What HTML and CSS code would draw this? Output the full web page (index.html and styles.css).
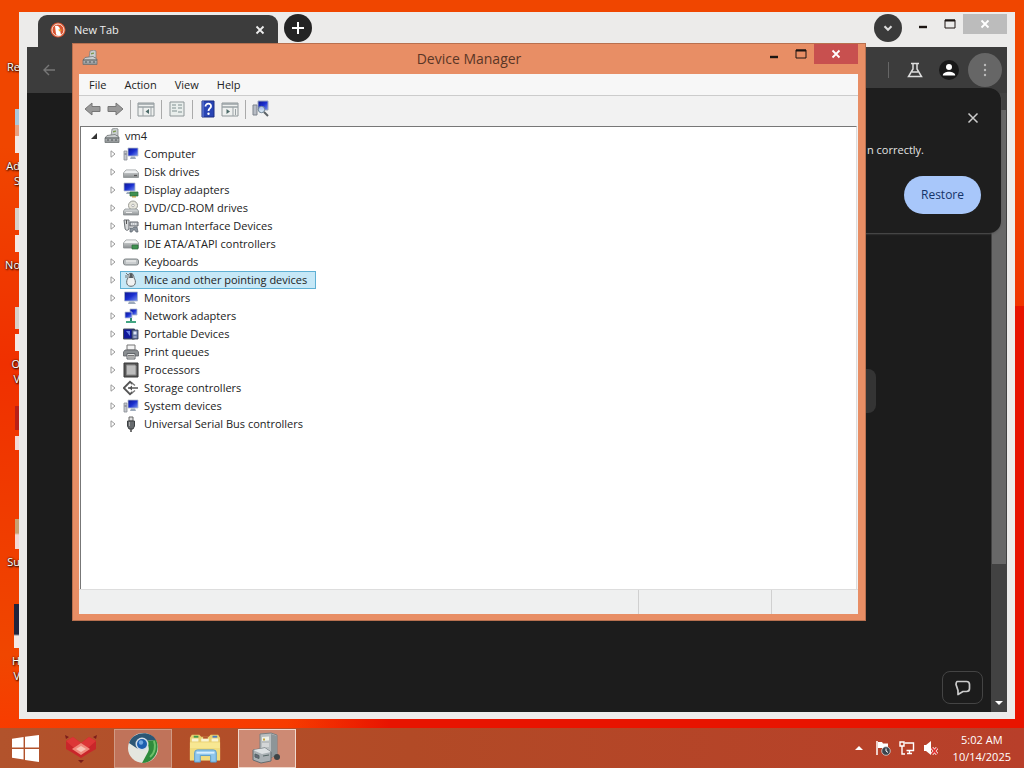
FILE: index.html
```html
<!DOCTYPE html>
<html lang="en">
<head>
<meta charset="utf-8">
<title>Device Manager</title>
<link rel="stylesheet" href="styles.css">
</head>
<body>
<svg class="defs" aria-hidden="true">
  <defs>
    <linearGradient id="metal" x1="0" y1="0" x2="0" y2="1"><stop offset="0" stop-color="#dfe2e3"/><stop offset="1" stop-color="#8b8f91"/></linearGradient>
    <linearGradient id="screen" x1="0" y1="0" x2="1" y2="1"><stop offset="0" stop-color="#0c1690"/><stop offset=".5" stop-color="#1a2fd0"/><stop offset="1" stop-color="#7d97ee"/></linearGradient>
    <symbol id="i-pc" viewBox="0 0 16 16"><path d="M8 1l4-1 2 1v7H7z" fill="#c9cdce" stroke="#777c7e" stroke-width=".7"/><path d="M9 3l3-.6v1.400L9 4.400z" fill="#7d9a50"/><path d="M3 7.500l8-1 4 2.500v5.500H1V10z" fill="url(#metal)" stroke="#6d7274" stroke-width=".8"/><path d="M1 10h14M3 12h2M7 12h2M11 12h2" stroke="#4f5557"/></symbol>
    <symbol id="i-computer" viewBox="0 0 16 16"><path d="M1 5h3v9H1z" fill="#c3c6cb" stroke="#888d94" stroke-width=".8"/><path d="M1.500 8h2" stroke="#667"/><path d="M5 2h10v8H5z" fill="url(#screen)" stroke="#b4bccb" stroke-width=".8"/><path d="M8 10.500h4l1 2.500H7z" fill="#9daaba"/></symbol>
    <symbol id="i-disk" viewBox="0 0 16 16"><path d="M3 6h10l2.500 3v4.500H.5V9z" fill="url(#metal)" stroke="#8c9092" stroke-width=".8"/><path d="M3 6.500h10l2 2.500H1z" fill="#eef0f1"/><path d="M11 11.500h3" stroke="#555" stroke-width="1.200"/></symbol>
    <symbol id="i-display" viewBox="0 0 16 16"><path d="M1 1h11v8H1z" fill="url(#screen)" stroke="#b4bccb" stroke-width=".8"/><path d="M4 10h4v2H3z" fill="#9daaba"/><path d="M7 10h8v4H7z" fill="#3f9150" stroke="#296b3a" stroke-width=".7"/><path d="M9 14v1.500h4V14" fill="#b6a252"/></symbol>
    <symbol id="i-dvd" viewBox="0 0 16 16"><circle cx="10" cy="5.500" r="4.500" fill="#e7e6dc" stroke="#9c9c96"/><circle cx="10" cy="5.500" r="1.300" fill="#fff" stroke="#999" stroke-width=".7"/><path d="M2 9h12l1.500 2v4H.5v-4z" fill="url(#metal)" stroke="#8c9092" stroke-width=".8"/><path d="M3 12.500h6" stroke="#eee"/></symbol>
    <symbol id="i-hid" viewBox="0 0 16 16"><path d="M1 2h5v8c0 3-4 3-4 0z" fill="#d6d8da" stroke="#666b70"/><path d="M3.500 2v4" stroke="#555"/><path d="M7 4h8v4H7z" fill="#bfc3c7" stroke="#666b70"/><path d="M8 6h6" stroke="#fff" stroke-dasharray="1 1"/><path d="M7 10h3l1-1h3l1 5h-2l-1-2h-2l-1 2H7z" fill="#8d959e" stroke="#5d656e" stroke-width=".7"/></symbol>
    <symbol id="i-ide" viewBox="0 0 16 16"><path d="M3 4h10l2.500 3v5H.5V7z" fill="url(#metal)" stroke="#8c9092" stroke-width=".8"/><path d="M3 4.500h10L15 7H1z" fill="#f2f3f3"/><path d="M9 9h6v4H9z" fill="#3f9150" stroke="#296b3a" stroke-width=".7"/></symbol>
    <symbol id="i-keyboard" viewBox="0 0 16 16"><rect x=".5" y="5" width="15" height="6" rx="2" fill="#b9bdbf" stroke="#7f8587"/><path d="M3 7h10" stroke="#f4f4f4" stroke-width="1.300"/><path d="M3 9h10" stroke="#dfe1e2"/></symbol>
    <symbol id="i-mouse" viewBox="0 0 16 16"><path d="M3 1l2 2M3 3v3" stroke="#777" fill="none"/><path d="M6 2c3-2 5 1 5 4 1 1 2 4 1 6-1 3-7 3-8 0-.8-2 0-5 1-6 0-2 0-3 1-4z" fill="#f1f2f2" stroke="#62696c"/><path d="M7 1.500h2.500L10 6H6z" fill="#555c60"/></symbol>
    <symbol id="i-monitor" viewBox="0 0 16 16"><path d="M1.500 2h13v9h-13z" fill="url(#screen)" stroke="#aab6cc" stroke-width=".8"/><path d="M6 11.500h5l2 2.500H5z" fill="#9daaba"/></symbol>
    <symbol id="i-network" viewBox="0 0 16 16"><path d="M7 1h7v6H7z" fill="url(#screen)" stroke="#aab6cc" stroke-width=".8"/><path d="M2 4h7v6H2z" fill="url(#screen)" stroke="#b9c4d8" stroke-width=".8"/><path d="M8 10v3" stroke="#2d8a70" stroke-width="2"/><path d="M3 13h10v2H3z" fill="#43a582"/></symbol>
    <symbol id="i-portable" viewBox="0 0 16 16"><path d="M.5 3h11v10H.5z" fill="#10189a" stroke="#49505c"/><path d="M3 5h4v5z" fill="#697fe0"/><path d="M9 4h6v9H9z" fill="#6577a5" stroke="#303848" stroke-width=".8"/><path d="M10.500 5.500h3v3h-3z" fill="#dfe7f5"/><path d="M10.500 11h3" stroke="#ccd"/></symbol>
    <symbol id="i-print" viewBox="0 0 16 16"><path d="M4 1h8v5H4z" fill="#f3f3f3" stroke="#777"/><path d="M2 6h12l1.500 2v4H.5V8z" fill="#8a8e91" stroke="#5d6164" stroke-width=".8"/><path d="M4 9.500h8V15H4z" fill="#e4e5e6" stroke="#62666a"/><path d="M5 11.500h6M5 13h6" stroke="#777"/></symbol>
    <symbol id="i-cpu" viewBox="0 0 16 16"><path d="M1 1h14v14H1z" fill="#565656" stroke="#393939"/><path d="M3.500 3h8.500l1 1v9H3.500z" fill="#bdbdbd" stroke="#888"/></symbol>
    <symbol id="i-storage" viewBox="0 0 16 16"><path d="M9.500 4L7 1.800.8 8 7 14.200 9.500 12" fill="none" stroke="#555" stroke-width="1.800"/><path d="M5 8h10" stroke="#555" stroke-width="1.500"/><path d="M9 5.500v5L6 8z" fill="#555"/><path d="M9 3l3 2.500M9 13l3-2.500" stroke="#777" stroke-width="1.300"/></symbol>
    <symbol id="i-usb" viewBox="0 0 16 16"><path d="M6 1h4v4H6z" fill="#ddd" stroke="#666"/><path d="M4.500 5h7v5L10 13H6l-1.500-3z" fill="#666a6d" stroke="#3c4042"/><path d="M8 13v3" stroke="#444" stroke-width="1.500"/><path d="M6.500 6v4" stroke="#aaa"/></symbol>
    <symbol id="i-min" viewBox="0 0 12 12"><path d="M2 9h8" stroke="currentColor" stroke-width="2.400"/></symbol>
    <symbol id="i-max" viewBox="0 0 12 12"><path d="M1 2h10v8H1z" fill="none" stroke="currentColor"/><path d="M1 2.500h10" stroke="currentColor" stroke-width="2"/></symbol>
    <symbol id="i-x" viewBox="0 0 12 12"><path d="M2.500 2.500l7 7M9.500 2.500l-7 7" stroke="currentColor" stroke-width="1.800" fill="none"/></symbol>
  </defs>
</svg>

<main class="desktop">
  <ul class="shortcuts">
    <li class="shortcut"><span class="shortcut-icon none"></span><span class="shortcut-label">Re</span></li>
    <li class="shortcut"><span class="shortcut-icon blue"></span><span class="shortcut-label">Ad<br>S</span></li>
    <li class="shortcut"><span class="shortcut-icon paper"></span><span class="shortcut-label">No</span></li>
    <li class="shortcut"><span class="shortcut-icon paper"></span><span class="shortcut-label">O<br>V</span></li>
    <li class="shortcut"><span class="shortcut-icon red"></span><span class="shortcut-label"></span></li>
    <li class="shortcut"><span class="shortcut-icon small"></span><span class="shortcut-label">Su</span></li>
    <li class="shortcut"><span class="shortcut-icon navy"></span><span class="shortcut-label">H<br>V</span></li>
  </ul>

  <section class="browser" aria-label="Browser">
    <header class="tabstrip">
      <div class="tab">
        <svg class="favicon" viewBox="0 0 16 16"><circle cx="8" cy="8" r="7.500" fill="#d9532f"/><circle cx="8" cy="8" r="6" fill="none" stroke="#f6e7df"/><path d="M5 4c3-1 5 1 5 4l1 5c-2 1-4 1-5-1z" fill="#fff"/><path d="M8.500 7l3.500 1-3 1.500z" fill="#f0b429"/></svg>
        <span class="tab-title">New Tab</span>
        <button class="tab-close" aria-label="Close tab"><svg viewBox="0 0 12 12"><use href="#i-x"/></svg></button>
      </div>
      <button class="round" aria-label="New tab"><svg viewBox="0 0 14 14"><path d="M7 1v12M1 7h12" stroke="#fff" stroke-width="2"/></svg></button>
      <span class="grow"></span>
      <button class="round tabs-menu" aria-label="Search tabs"><svg viewBox="0 0 12 12"><path d="M3 4.500l3 3 3-3" fill="none" stroke="#ddd" stroke-width="1.800"/></svg></button>
      <div class="caption">
        <button aria-label="Minimize"><svg viewBox="0 0 12 12"><use href="#i-min"/></svg></button>
        <button aria-label="Maximize"><svg viewBox="0 0 12 12"><use href="#i-max"/></svg></button>
        <button class="caption-close" aria-label="Close"><svg viewBox="0 0 12 12"><use href="#i-x"/></svg></button>
      </div>
    </header>
    <div class="browser-body">
      <div class="toolbar">
        <button aria-label="Back"><svg viewBox="0 0 14 14"><path d="M13 7H2M7 2L2 7l5 5" fill="none" stroke="#777" stroke-width="1.400"/></svg></button>
        <span class="grow"></span>
        <span class="toolbar-rule"></span>
        <button aria-label="Labs"><svg class="lab" viewBox="0 0 16 16"><path d="M4 1.500h8M6 2v5l-4.500 7.500h13L10 7V2M5 10h6" fill="none" stroke="#ddd" stroke-width="1.500"/></svg></button>
        <button class="profile" aria-label="Profile"><svg viewBox="0 0 14 14"><circle cx="7" cy="4" r="3" fill="#fff"/><path d="M.8 12.500c0-5 12.400-5 12.400 0z" fill="#fff"/></svg></button>
        <button class="more" aria-label="More"><svg viewBox="0 0 14 14"><circle cx="7" cy="2" r="1.200" fill="#bbb"/><circle cx="7" cy="7" r="1.200" fill="#bbb"/><circle cx="7" cy="12" r="1.200" fill="#bbb"/></svg></button>
      </div>
      <div class="page">
        <div class="page-content">
          <div class="page-search"></div>
          <button class="feedback" aria-label="Feedback"><svg viewBox="0 0 18 18"><path d="M3 2.500h9.500q3 0 3 3v4q0 3-3 3H9L4 15.500v-4L2 5.500q0-2 1-3z" fill="none" stroke="#ccc" stroke-width="1.700" stroke-linejoin="round"/></svg></button>
        </div>
        <div class="scrollbar"><span class="thumb"></span><svg viewBox="0 0 8 8"><path d="M0 2h8L4 6z" fill="#fff"/></svg></div>
      </div>
      <aside class="bubble">
        <button class="bubble-close" aria-label="Dismiss"><svg viewBox="0 0 12 12"><path d="M1.500 1.500l9 9M10.500 1.500l-9 9" stroke="#ccc" stroke-width="1.500"/></svg></button>
        <p>n correctly.</p>
        <button class="restore">Restore</button>
      </aside>
    </div>
  </section>

  <section class="devmgr" aria-label="Device Manager">
    <header class="titlebar">
      <svg class="title-icon" viewBox="0 0 16 16"><use href="#i-pc"/></svg>
      <h1>Device Manager</h1>
      <div class="caption">
        <button aria-label="Minimize"><svg viewBox="0 0 12 12"><use href="#i-min"/></svg></button>
        <button aria-label="Maximize"><svg viewBox="0 0 12 12"><use href="#i-max"/></svg></button>
        <button class="caption-close" aria-label="Close"><svg viewBox="0 0 12 12"><use href="#i-x"/></svg></button>
      </div>
    </header>
    <div class="client">
      <nav class="menubar">
        <button>File</button><button>Action</button><button>View</button><button>Help</button>
      </nav>
      <div class="tools">
        <button aria-label="Back"><svg viewBox="0 0 18 18"><path d="M1 9l7-6v3.500h8v5H8V15z" fill="#999" stroke="#777"/></svg></button>
        <button aria-label="Forward"><svg viewBox="0 0 18 18"><path d="M17 9l-7-6v3.500H2v5h8V15z" fill="#999" stroke="#777"/></svg></button>
        <span class="sep"></span>
        <button aria-label="Show console tree"><svg viewBox="0 0 18 18"><path d="M1 3h16v13H1z" fill="#eef0ef" stroke="#8e9698"/><path d="M1 4h16M1 7h16" stroke="#9ba3a6" stroke-width="1.500"/><path d="M6 7v9M14 7v9" stroke="#9ba3a6"/><path d="M12 9v5L8.500 11.500z" fill="#4c6a68"/></svg></button>
        <span class="sep"></span>
        <button aria-label="Properties"><svg viewBox="0 0 18 18"><path d="M2 2h14v14H2z" fill="#e9eeec" stroke="#8e9698"/><path d="M4 5h4M4 8h4M4 11h5M10 5h4M10 8h4M10 12h4" stroke="#a3b0ae" stroke-width="1.300"/></svg></button>
        <span class="sep"></span>
        <button aria-label="Help"><svg viewBox="0 0 18 18"><path d="M3 1h12v16H3z" fill="#2844b4" stroke="#1c2f84"/><path d="M4 1v16" stroke="#6e88dc"/><path d="M6.500 6.500c0-4 6-3.500 5.500 0-.3 2-2.500 2-2.500 4.500" fill="none" stroke="#fff" stroke-width="1.800"/><circle cx="9.500" cy="13.800" r="1.200" fill="#fff"/></svg></button>
        <button aria-label="Show action pane"><svg viewBox="0 0 18 18"><path d="M1 3h16v13H1z" fill="#eef0ef" stroke="#8e9698"/><path d="M1 4h16M1 7h16" stroke="#9ba3a6" stroke-width="1.500"/><path d="M12 7v9M14.500 9v6" stroke="#9ba3a6"/><path d="M5.500 9v5L9 11.500z" fill="#4c6a68"/></svg></button>
        <span class="sep"></span>
        <button aria-label="Scan for hardware changes"><svg viewBox="0 0 18 18"><path d="M1 5h4v10H1z" fill="#b7bcc4" stroke="#7c838c"/><path d="M6 1h10v9H6z" fill="url(#screen)" stroke="#9ba7be"/><circle cx="9.500" cy="9.500" r="3.200" fill="#cfe2f4" fill-opacity=".85" stroke="#6d8294"/><path d="M12 12l4 4" stroke="#5c6266" stroke-width="2"/></svg></button>
      </div>
      <ul class="tree">
        <li class="root"><svg class="arrow" viewBox="0 0 8 8"><path d="M7 1v6H1z" fill="#333"/></svg><svg class="dev" viewBox="0 0 16 16"><use href="#i-pc"/></svg><span>vm4</span></li>
        <li><svg class="arrow" viewBox="0 0 8 8"><path d="M2 .8v6.400L6 4z"/></svg><svg class="dev" viewBox="0 0 16 16"><use href="#i-computer"/></svg><span>Computer</span></li>
        <li><svg class="arrow" viewBox="0 0 8 8"><path d="M2 .8v6.400L6 4z"/></svg><svg class="dev" viewBox="0 0 16 16"><use href="#i-disk"/></svg><span>Disk drives</span></li>
        <li><svg class="arrow" viewBox="0 0 8 8"><path d="M2 .8v6.400L6 4z"/></svg><svg class="dev" viewBox="0 0 16 16"><use href="#i-display"/></svg><span>Display adapters</span></li>
        <li><svg class="arrow" viewBox="0 0 8 8"><path d="M2 .8v6.400L6 4z"/></svg><svg class="dev" viewBox="0 0 16 16"><use href="#i-dvd"/></svg><span>DVD/CD-ROM drives</span></li>
        <li><svg class="arrow" viewBox="0 0 8 8"><path d="M2 .8v6.400L6 4z"/></svg><svg class="dev" viewBox="0 0 16 16"><use href="#i-hid"/></svg><span>Human Interface Devices</span></li>
        <li><svg class="arrow" viewBox="0 0 8 8"><path d="M2 .8v6.400L6 4z"/></svg><svg class="dev" viewBox="0 0 16 16"><use href="#i-ide"/></svg><span>IDE ATA/ATAPI controllers</span></li>
        <li><svg class="arrow" viewBox="0 0 8 8"><path d="M2 .8v6.400L6 4z"/></svg><svg class="dev" viewBox="0 0 16 16"><use href="#i-keyboard"/></svg><span>Keyboards</span></li>
        <li><svg class="arrow" viewBox="0 0 8 8"><path d="M2 .8v6.400L6 4z"/></svg><div class="selected"><svg class="dev" viewBox="0 0 16 16"><use href="#i-mouse"/></svg><span>Mice and other pointing devices</span></div></li>
        <li><svg class="arrow" viewBox="0 0 8 8"><path d="M2 .8v6.400L6 4z"/></svg><svg class="dev" viewBox="0 0 16 16"><use href="#i-monitor"/></svg><span>Monitors</span></li>
        <li><svg class="arrow" viewBox="0 0 8 8"><path d="M2 .8v6.400L6 4z"/></svg><svg class="dev" viewBox="0 0 16 16"><use href="#i-network"/></svg><span>Network adapters</span></li>
        <li><svg class="arrow" viewBox="0 0 8 8"><path d="M2 .8v6.400L6 4z"/></svg><svg class="dev" viewBox="0 0 16 16"><use href="#i-portable"/></svg><span>Portable Devices</span></li>
        <li><svg class="arrow" viewBox="0 0 8 8"><path d="M2 .8v6.400L6 4z"/></svg><svg class="dev" viewBox="0 0 16 16"><use href="#i-print"/></svg><span>Print queues</span></li>
        <li><svg class="arrow" viewBox="0 0 8 8"><path d="M2 .8v6.400L6 4z"/></svg><svg class="dev" viewBox="0 0 16 16"><use href="#i-cpu"/></svg><span>Processors</span></li>
        <li><svg class="arrow" viewBox="0 0 8 8"><path d="M2 .8v6.400L6 4z"/></svg><svg class="dev" viewBox="0 0 16 16"><use href="#i-storage"/></svg><span>Storage controllers</span></li>
        <li><svg class="arrow" viewBox="0 0 8 8"><path d="M2 .8v6.400L6 4z"/></svg><svg class="dev" viewBox="0 0 16 16"><use href="#i-computer"/></svg><span>System devices</span></li>
        <li><svg class="arrow" viewBox="0 0 8 8"><path d="M2 .8v6.400L6 4z"/></svg><svg class="dev" viewBox="0 0 16 16"><use href="#i-usb"/></svg><span>Universal Serial Bus controllers</span></li>
      </ul>
      <footer class="status"><span></span><span></span><span></span></footer>
    </div>
  </section>
</main>

<footer class="taskbar">
  <button class="start" aria-label="Start"><svg viewBox="0 0 28 28"><path d="M0 4l12-2v11H0zM13.500 1.800L28 0v13H13.500zM0 14.500h12v11l-12-2zM13.500 14.500H28V28l-14.500-2.200z" fill="#fff"/></svg></button>
  <button class="task" aria-label="Remote tool"><svg viewBox="0 0 32 32"><path d="M1 9l7-4 8 6 8-6 7 4v8l-7 4-8 5-8-5-7-4z" fill="#c9262a"/><path d="M1 9l7-4 8 6-7 5zM31 9l-7-4-8 6 7 5z" fill="#dd3636"/><path d="M16 11l9 6-9 6-9-6z" fill="#f08a7c"/><path d="M16 14l5 3-5 3-5-3z" fill="#f9c3b4"/><path d="M0 3l4 2-3 2zM32 3l-4 2 3 2zM13 28h6l-3 3z" fill="#7c1d1a"/></svg></button>
  <button class="task open" aria-label="Browser"><svg viewBox="0 0 32 32"><circle cx="16" cy="16" r="15" fill="#e4e6df"/><path d="M2 11C6-1 24-2 29 8l-12 1c-5 0-7 4-6 8z" fill="#2c5674"/><path d="M29 8c5 10-2 23-14 23l6-11c2-4 0-9-4-11z" fill="#2f8b3c"/><path d="M27 9c2 5 1 12-4 16" stroke="#6fc06a" stroke-width="2" fill="none"/><circle cx="15" cy="12" r="6.500" fill="#d5dee6"/><circle cx="15" cy="12" r="5" fill="#1d5fb0"/><circle cx="14" cy="10.500" r="2.200" fill="#6ea6e0"/></svg></button>
  <button class="task" aria-label="File Explorer"><svg viewBox="0 0 34 32"><path d="M1 5l2-3h8l2 2h8l2-2h8l2 3v24H1z" fill="#e9cf70"/><path d="M3 6h7v3H3zM13 6h8v3h-8zM24 6h7v3h-7z" fill="#f8f4d4"/><path d="M5 3h5v2H5z" fill="#3f9a4c"/><path d="M15 4h5v2h-5z" fill="#b65532"/><path d="M25 3h5v2h-5z" fill="#4a7fc4"/><path d="M1 10h32v19H1z" fill="#f7e792"/><path d="M1 16h32v13H1z" fill="#f0dc7e"/><path d="M6 31V21q0-3 3-3h17q3 0 3 3v10h-6v-7H12v7z" fill="#8fc6ec" stroke="#5a9ccc"/><path d="M8 21h19" stroke="#d7efff" stroke-width="2"/></svg></button>
  <button class="task open active" aria-label="Device Manager"><svg viewBox="0 0 32 32"><path d="M9 2l11-1 6 2v20l-7 3-10-4z" fill="#b9bec0" stroke="#7a8083"/><path d="M20 2l6 2v19l-6 2z" fill="#8d9598"/><path d="M11 5l7-.6v4L11 9z" fill="#eef0e7"/><path d="M12 6.500h2v2h-2z" fill="#c6a53d"/><path d="M11 12h7M11 14h7" stroke="#eee"/><path d="M2 18l12-2 6 4v9l-10 2-8-3z" fill="#a9b0b4" stroke="#656d71"/><path d="M2 18l12-2 6 4-9 2z" fill="#dde1e3"/><path d="M4 22l4 1.500v3L4 25zM12 24l6-1" stroke="#566" fill="#667"/><circle cx="26" cy="25" r="3" fill="#3e4446"/></svg></button>
  <span class="grow"></span>
  <div class="tray">
    <button aria-label="Show hidden icons"><svg class="up" viewBox="0 0 8 8"><path d="M0 6h8L4 2z" fill="#fff"/></svg></button>
    <button aria-label="Action Center"><svg viewBox="0 0 16 16"><path d="M2 1v14" stroke="#fff" stroke-width="1.500"/><path d="M3 2h4l1 1.500h5V9H8L7 8H3z" fill="#fff"/><circle cx="11" cy="11" r="4.300" fill="#39434d" stroke="#d6d6d6" stroke-width=".8"/><path d="M11 8.500V11l2 1.500" stroke="#fff" fill="none"/></svg></button>
    <button aria-label="Network"><svg viewBox="0 0 16 16"><path d="M5.500 3h9v7.500h-7M8 13.500h5M10.500 10.500v3" fill="none" stroke="#fff" stroke-width="1.400"/><path d="M1 2h4v4H1zM3 6v8h3" fill="none" stroke="#fff" stroke-width="1.400"/></svg></button>
    <button aria-label="Volume muted"><svg viewBox="0 0 16 16"><path d="M1 5h2l5-4v14l-5-4H1z" fill="#fff"/><path d="M9 8l5 6M14 8l-5 6" stroke="#fff" stroke-width="3"/><path d="M9 8l5 6M14 8l-5 6" stroke="#e03030" stroke-width="1.800"/></svg></button>
  </div>
  <div class="clock"><time>5:02 AM</time><span>10/14/2025</span></div>
</footer>
</body>
</html>
```
FILE: styles.css
```css
* { box-sizing: border-box; }
body {
  margin: 0;
  height: 100vh;
  display: flex;
  flex-direction: column;
  overflow: hidden;
  font: 11px/18px "Open Sans", "Noto Sans", sans-serif;
  color: #222;
}
button { border: 0; padding: 0; margin: 0; background: none; font: inherit; color: inherit; display: flex; align-items: center; justify-content: center; }
ul { list-style: none; margin: 0; padding: 0; }
svg { display: block; flex: none; }
.defs { position: absolute; width: 0; height: 0; }
.grow { flex: 1; }

.desktop {
  flex: 1;
  position: relative;
  min-height: 0;
  background:
    linear-gradient(to right, transparent 28%, #e81400 38%) bottom / 100% 58% no-repeat,
    linear-gradient(#f04600 0 20%, #f03000 50%, #f04600 90%, #f83c00);
}

.shortcuts { width: 20px; padding-top: 10px; }
.shortcut { height: 99px; display: flex; flex-direction: column; align-items: flex-end; }
.shortcut-icon { width: 5px; height: 44px; margin-bottom: 5px; }
.shortcut-icon.blue { background: linear-gradient(#a9c8dc 0 16px, #e8a080 16px 27px, #f4e8e4 27px); }
.shortcut-icon.paper { background: linear-gradient(#d8d0c8 0 22px, transparent 22px 27px, #f4e8e4 27px); }
.shortcut-icon.red { background: linear-gradient(#b82018 0 24px, transparent 24px 30px, #f4d8d4 30px); }
.shortcut-icon.small { background: linear-gradient(transparent 0 14px, #c8a070 14px 28px, #f4d8d4 30px); }
.shortcut-icon.navy { width: 6px; background: linear-gradient(#20243c 0 30px, #f4e8e4 32px); }
.shortcut-label { line-height: 15px; min-height: 15px; text-align: right; color: #fff; text-shadow: 1px 1px 2px #000, 0 0 2px #000; }

.browser {
  position: absolute;
  inset: 12px 9px 9px 19px;
  padding: 0 8px 7px;
  display: flex;
  flex-direction: column;
  background: #ecebea;
}
.tabstrip { height: 35px; display: flex; align-items: flex-start; padding: 2px 0 0 11px; }
.tab { width: 240px; height: 33px; margin-top: 1px; padding: 0 12px 4px; display: flex; align-items: center; gap: 8px; background: #3c3c3c; color: #eee; border-radius: 9px 9px 0 0; }
.favicon { width: 16px; height: 16px; }
.tab-title { flex: 1; }
.tab-close svg { width: 12px; height: 12px; color: #eee; }
.round { width: 28px; height: 28px; margin-left: 6px; border-radius: 50%; background: #242424; }
.tabs-menu { background: #3a3a3a; }
.round svg { width: 14px; height: 14px; }
.caption { display: flex; color: #1c1512; }
.caption button { width: 27px; height: 20px; }
.caption svg { width: 12px; height: 12px; }
.caption .caption-close { width: 44px; color: #fff; }
.browser .caption { margin-left: 7px; }
.browser .caption-close { background: #bcbcbc; }

.browser-body { flex: 1; min-height: 0; position: relative; display: flex; flex-direction: column; background: #1c1c1c; }
.toolbar { height: 46px; display: flex; align-items: center; gap: 8px; padding: 0 5px 0 15px; background: #3c3c3c; }
.toolbar svg { width: 14px; height: 14px; }
.toolbar-rule { width: 1px; height: 16px; margin-right: 4px; background: #666; }
.toolbar button { width: 28px; height: 34px; }
.toolbar .lab { width: 16px; height: 16px; }
.toolbar button:first-child { width: 14px; }
.toolbar .profile { width: 20px; height: 20px; margin: 0 1px 0 2px; border-radius: 50%; background: #181818; }
.toolbar .more { width: 34px; border-radius: 50%; background: #666; }
.page { flex: 1; min-height: 0; display: flex; }
.page-content { flex: 1; display: flex; flex-direction: column; justify-content: space-between; align-items: flex-end; padding: 0 8px 8px 0; }
.page-search { width: 70%; height: 44px; margin: 276px 107px 0 0; border-radius: 8px; background: #343434; }
.feedback { width: 41px; height: 33px; border: 1px solid #444; border-radius: 8px; }
.feedback svg { width: 18px; height: 18px; }
.scrollbar { width: 16px; padding: 17px 1px 5px; display: flex; flex-direction: column; align-items: center; justify-content: space-between; background: #424242; }
.scrollbar svg { width: 8px; height: 8px; }
.thumb { width: 100%; height: 76%; background: #686868; }
.bubble { position: absolute; top: 41px; right: 6px; width: 320px; padding: 24px 20px 19px; display: flex; flex-direction: column; align-items: flex-end; background: #1e1e1e; border-radius: 12px; box-shadow: 0 1px 2px #555; color: #e4e4e4; }
.bubble-close { margin-right: 2px; }
.bubble-close svg { width: 12px; height: 12px; }
.bubble p { margin: 17px 57px 17px 0; }
.restore { width: 77px; height: 38px; border-radius: 19px; background: #a8c7fa; color: #143468; font-size: 12px; }

.devmgr {
  position: absolute;
  inset: 43px 158px 107px 72px;
  padding: 0 8px 7px 7px;
  display: flex;
  flex-direction: column;
  background: #e88e65;
  outline: 1px solid #b8704f;
  outline-offset: -1px;
}
.titlebar { height: 31px; display: flex; align-items: flex-start; padding: 1px 0 0 3px; }
.title-icon { width: 16px; height: 16px; margin-top: 6px; }
.titlebar h1 { flex: 1; margin: 0 0 0 80px; padding-top: 5px; text-align: center; font-size: 14px; font-weight: 400; line-height: 20px; color: #5a3626; }
.devmgr .caption-close { background: #c8504f; }
.client { flex: 1; min-height: 0; display: flex; flex-direction: column; background: #f2f2f2; }
.menubar { height: 22px; display: flex; gap: 18px; padding: 0 10px; background: #f7f7f7; border-bottom: 1px solid #ccc; }
.tools { height: 30px; display: flex; align-items: center; padding: 0 3px 4px; }
.tools svg { width: 18px; height: 18px; }
.tools button { width: 22px; }
.tools .sep { width: 1px; height: 19px; margin: 0 4px; background: #aaa; }
.tree { flex: 1; min-height: 0; margin: 0 1px; padding: 0 0 0 9px; background: #fff; border: solid #777; border-width: 1px 1px 0; border-right-color: #ddd; }
.tree li { height: 18px; display: flex; align-items: center; gap: 5px; padding-left: 19px; }
.tree .root { padding-left: 0; }
.arrow { width: 8px; height: 8px; margin-right: 1px; fill: #fff; stroke: #999; stroke-width: 1; }
.root .arrow { stroke: none; }
.dev { width: 16px; height: 16px; }
.selected { height: 18px; display: flex; align-items: center; gap: 5px; margin-left: -3px; padding: 0 8px 0 2px; border: 1px solid #5fb0d4; background: #c6e8f7; }
.status { height: 25px; display: flex; background: #eff0f0; border-top: 1px solid #ddd; }
.status span { width: 87px; border-left: 1px solid #d0d0d0; }
.status span:nth-child(2) { width: 133px; }
.status span:first-child { flex: 1; border-left: 0; }

.taskbar { height: 40px; display: flex; align-items: center; padding: 0 13px 0 12px; background: linear-gradient(to right, #b2532c, #b24a26 40%, #b83f2a); color: #fff; }
.start svg { width: 27px; height: 27px; }
.start { margin-right: 13px; }
.task { width: 58px; height: 39px; margin-right: 4px; }
.task svg { width: 32px; height: 32px; }
.task.open { border: 1px solid #d09a84; background: #c0735a; }
.task.active { border-color: #f0d8cc; background: #cd8a74; }
.tray { display: flex; align-items: center; gap: 8px; margin-right: 14px; }
.tray svg { width: 16px; height: 16px; }
.tray .up { width: 8px; height: 8px; margin-right: 4px; }
.clock { display: flex; flex-direction: column; align-items: center; line-height: 17px; }
```
